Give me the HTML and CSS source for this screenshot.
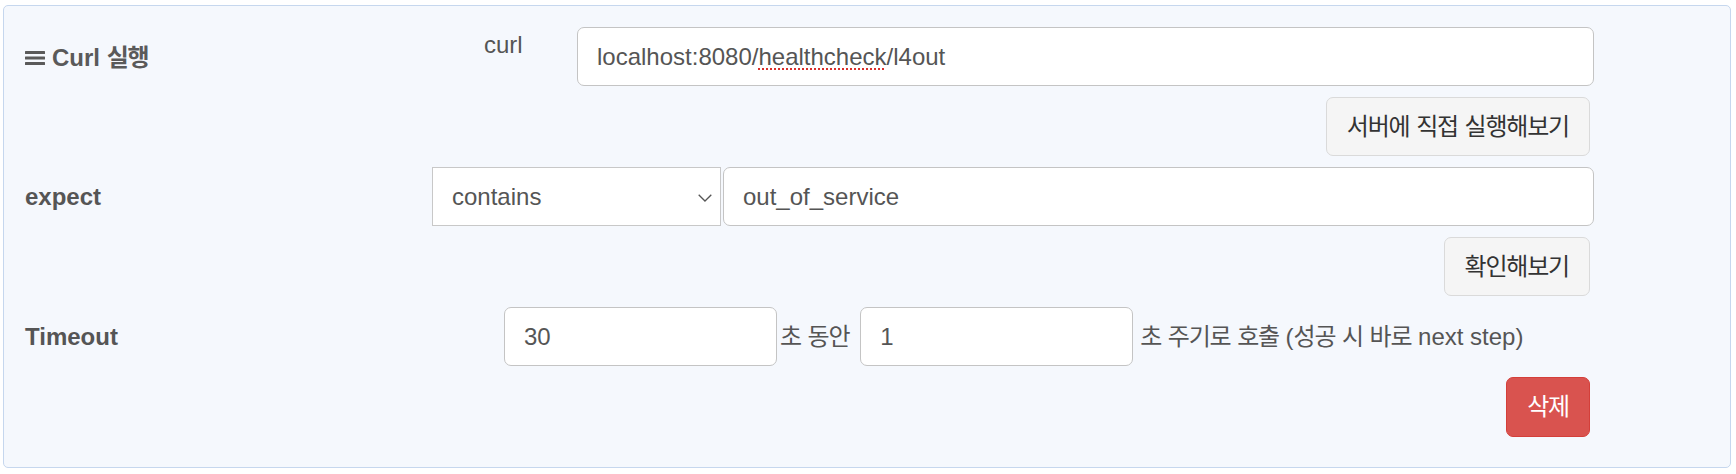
FILE: index.html
```html
<!DOCTYPE html>
<html lang="ko">
<head>
<meta charset="utf-8">
<title>Curl 실행</title>
<link rel="stylesheet" href="styles.css">
</head>
<body>
<div class="panel">
  <div class="row row-curl">
    <div class="title">
      <svg class="hamburger" width="20" height="14" viewBox="0 0 20 14"><rect x="0" y="0" width="20" height="3" rx="0.5"/><rect x="0" y="5.5" width="20" height="3" rx="0.5"/><rect x="0" y="11" width="20" height="3" rx="0.5"/></svg>
      <span>Curl <span class="ko">실행</span></span>
    </div>
    <div class="label-curl">curl</div>
    <div class="field field-grow">localhost:8080/<span class="spell">healthcheck</span>/l4out</div>
  </div>
  <div class="actions"><button class="btn"><span class="ko">서버에 직접 실행해보기</span></button></div>

  <div class="row row-expect">
    <div class="label label-expect">expect</div>
    <div class="select">
      <span>contains</span>
      <svg class="chevron" width="14" height="8" viewBox="0 0 14 8"><path d="M0.7 0.7 L7 7 L13.3 0.7" fill="none" stroke="#555" stroke-width="1.3"/></svg>
    </div>
    <div class="field field-grow field-joined">out_of_service</div>
  </div>
  <div class="actions"><button class="btn"><span class="ko">확인해보기</span></button></div>

  <div class="row row-timeout">
    <div class="label label-timeout">Timeout</div>
    <div class="field field-num">30</div>
    <span class="unit unit-during"><span class="ko">초 동안</span></span>
    <div class="field field-num">1</div>
    <span class="unit unit-cycle"><span class="ko">초 주기로 호출</span> (<span class="ko">성공 시 바로</span> next step)</span>
  </div>
  <div class="actions"><button class="btn btn-danger"><span class="ko">삭제</span></button></div>
</div>
</body>
</html>
```

FILE: styles.css
```css
html, body {
  margin: 0;
  padding: 0;
  background: #ffffff;
}

body {
  font-family: "Liberation Sans", "Noto Sans CJK KR", sans-serif;
  font-size: 24px;
  color: #555555;
  width: 1736px;
}

.ko {
  letter-spacing: -1.2px;
  word-spacing: 1.2px;
}

.panel {
  margin: 5px 5px 6px 3px;
  border: 1px solid #c6d7ee;
  border-radius: 5px;
  background: #f5f8fd;
  padding: 21px 136px 30px 21px;
}

.row {
  display: flex;
  align-items: center;
  height: 59px;
}

.title {
  width: 459px;
  display: flex;
  align-items: center;
  font-weight: bold;
  color: #5a5a5a;
  line-height: 28px;
  padding-top: 2px;
}

.hamburger {
  fill: #5a5a5a;
  margin-right: 7px;
  flex: none;
}

.label-curl {
  width: 93px;
  align-self: flex-start;
  padding-top: 4px;
  line-height: 28px;
}

.label {
  font-weight: bold;
  line-height: 28px;
}

.label-expect {
  width: 407px;
}

.label-timeout {
  width: 479px;
}

.field {
  box-sizing: border-box;
  height: 59px;
  border: 1px solid #c4c4c4;
  border-radius: 7px;
  background: #ffffff;
  padding: 0 19px;
  display: flex;
  align-items: center;
  white-space: nowrap;
  line-height: 28px;
}

.field-grow {
  flex: 1;
}

.field-joined {
  margin-left: 2px;
}

.field-num {
  width: 273px;
}

.spell {
  text-decoration: underline dotted #d9302c;
  text-decoration-thickness: 2px;
  text-underline-offset: 4px;
}

.select {
  box-sizing: border-box;
  width: 289px;
  height: 59px;
  border: 1px solid #c8c8c8;
  background: #ffffff;
  padding: 0 8px 0 19px;
  display: flex;
  align-items: center;
  justify-content: space-between;
  line-height: 28px;
}

.chevron {
  flex: none;
  margin-top: 2px;
}

.unit {
  white-space: nowrap;
  line-height: 28px;
}

.unit-during {
  margin: 0 11px 0 3px;
}

.unit-cycle {
  margin-left: 7px;
}

.actions {
  display: flex;
  justify-content: flex-end;
  margin: 11px 4px 11px 0;
}

.actions:last-child {
  margin-bottom: 0;
}

.btn {
  box-sizing: border-box;
  height: 59px;
  border: 1px solid #dadada;
  border-radius: 7px;
  background: #f5f5f5;
  color: #333333;
  font-family: "Liberation Sans", "Noto Sans CJK KR", sans-serif;
  font-size: 24px;
  padding: 0 20px 0 20px;
  line-height: 28px;
}

.btn-danger {
  background: #d9534f;
  border-color: #d43f3a;
  color: #ffffff;
  height: 60px;
}
```
